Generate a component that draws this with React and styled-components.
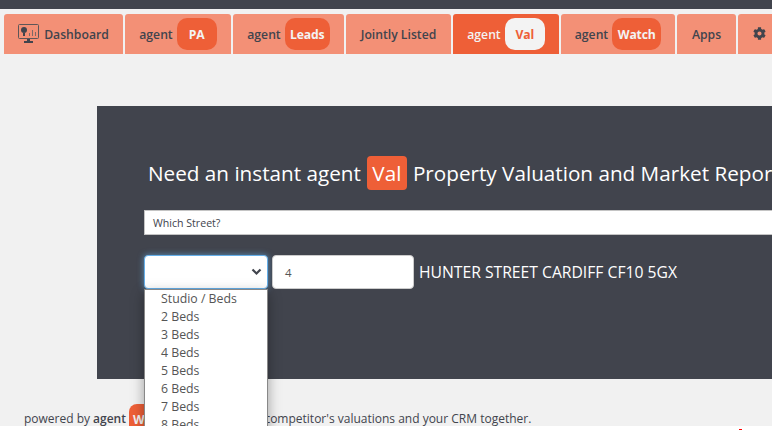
import React from "react";
import styled, { createGlobalStyle } from "styled-components";
import { FaCog } from "react-icons/fa";

const GlobalStyle = createGlobalStyle`
  html, body {
    margin: 0;
    padding: 0;
    background: #fff;
  }
  body {
    font-family: "Open Sans", "Liberation Sans", sans-serif;
    color: #41444d;
  }
`;

const Page = styled.div`
  width: 772px;
  height: 430px;
  overflow: hidden;
  position: relative;
`;

const Canvas = styled.div`
  height: 426px;
  background: #f1f1f1;
  overflow: hidden;
`;

const TopBar = styled.div`
  height: 9px;
  background: #41444d;
`;

const Tabs = styled.nav`
  display: flex;
  gap: 2px;
  margin: 5px 0 0 4px;
  width: 800px;
`;

const Tab = styled.a`
  box-sizing: border-box;
  flex: none;
  width: ${({ $w }) => $w}px;
  height: 40px;
  display: flex;
  align-items: center;
  justify-content: center;
  gap: 4px;
  border-radius: 3px 3px 0 0;
  font-size: 12.2px;
  font-weight: 600;
  background: ${({ $active }) => ($active ? "#ee5f37" : "#f39076")};
  color: ${({ $active }) => ($active ? "#f3f3f3" : "#41444d")};
`;

const TabIcon = styled.span`
  display: flex;
  margin-right: 1px;
`;

const GearWrap = styled.span`
  display: flex;
  margin: -2px 17px 0 0;
`;

const Pill = styled.span`
  display: flex;
  align-items: center;
  justify-content: center;
  height: 32px;
  width: ${({ $w }) => $w}px;
  border-radius: 10px;
  font-weight: 700;
  letter-spacing: -0.2px;
  background: ${({ $active }) => ($active ? "#f3f3f3" : "#ee5f37")};
  color: ${({ $active }) => ($active ? "#ee5f37" : "#f3f3f3")};
`;

const Panel = styled.section`
  box-sizing: border-box;
  margin: 52px 0 0 97px;
  width: 675px;
  height: 273px;
  background: #41444d;
  padding: 50px 0 0 47px;
  white-space: nowrap;
  position: relative;
  overflow: visible;
`;

const Heading = styled.h1`
  margin: 0 0 0 4px;
  width: 800px;
  height: 34px;
  display: flex;
  align-items: center;
  font-size: 20.7px;
  font-weight: 400;
  color: #fff;
`;

const HeadingBadge = styled.span`
  flex: none;
  display: inline-flex;
  align-items: center;
  justify-content: center;
  width: 40px;
  height: 34px;
  margin: 0 6px;
  border-radius: 4px;
  background: #ee5f37;
`;

const StreetBox = styled.div`
  box-sizing: border-box;
  height: 25px;
  width: 640px;
  margin-top: 20px;
  padding-left: 8px;
  display: flex;
  align-items: center;
  background: #fff;
  border: 1px solid #c4c4c4;
  font-size: 10.6px;
  color: #41444d;
`;

const Row = styled.div`
  display: flex;
  align-items: center;
  gap: 4px;
  margin-top: 20px;
  height: 34px;
`;

const BedsSelect = styled.div`
  box-sizing: border-box;
  width: 124px;
  height: 34px;
  background: #fff;
  border: 1px solid #66afe9;
  border-radius: 4px;
  box-shadow: 0 0 6px rgba(102, 175, 233, 0.7);
  display: flex;
  align-items: center;
  justify-content: flex-end;
  padding-right: 5px;
`;

const NumberBox = styled.div`
  box-sizing: border-box;
  width: 142px;
  height: 34px;
  background: #fff;
  border: 1px solid #ccc;
  border-radius: 4px;
  padding-left: 12px;
  display: flex;
  align-items: center;
  font-size: 11.5px;
  color: #555;
`;

const Address = styled.span`
  margin-left: 1px;
  font-size: 15.7px;
  font-weight: 400;
  color: #fff;
`;

const Dropdown = styled.ul`
  position: absolute;
  left: 47px;
  top: 183px;
  box-sizing: border-box;
  width: 124px;
  height: 200px;
  margin: 0;
  padding: 0 0 0 16px;
  list-style: none;
  background: #fff;
  border: 1px solid #888;
  box-shadow: 0 4px 12px rgba(0, 0, 0, 0.35);
  font-size: 12.3px;
  line-height: 18px;
  color: #555;
  z-index: 2;
`;

const Footer = styled.p`
  margin: 25px 0 0 24px;
  display: flex;
  align-items: center;
  height: 28px;
  font-size: 12px;
  color: #41444d;
  white-space: nowrap;
`;

const Strong = styled.b`
  font-weight: 600;
  margin: 0 3px;
`;

const FooterBadge = styled.span`
  display: inline-flex;
  align-self: flex-start;
  align-items: center;
  justify-content: center;
  flex: none;
  width: 46px;
  height: 30px;
  border-radius: 8px;
  background: #ee5f37;
  color: #f3f3f3;
  font-weight: 700;
  margin-right: 22px;
`;

const RedDot = styled.i`
  position: absolute;
  left: 739px;
  top: 429px;
  width: 3px;
  height: 1px;
  background: #f00;
`;

const DashIcon = () => (
  <svg width="21" height="20" viewBox="0 0 21 20" fill="none">
    <rect x="0.5" y="0.5" width="20" height="14" rx="1" stroke="#5d5658" />
    <circle cx="6" cy="6" r="3" fill="#41444d" />
    <rect x="5" y="9" width="2" height="3" fill="#41444d" />
    <path d="M11 12V9h1v3zM14 12V6h1v6zM17 12V8h1v4z" fill="#7d6a68" />
    <path d="M9 15h3v2H9zM6 17h9v2H6z" fill="#41444d" />
  </svg>
);

const Chevron = () => (
  <svg width="11" height="8" viewBox="0 0 11 8" fill="none">
    <path d="M1.5 1.5 5.5 5.5 9.5 1.5" stroke="#41444d" strokeWidth="2.2" />
  </svg>
);

const beds = ["Studio / Beds", "2 Beds", "3 Beds", "4 Beds", "5 Beds", "6 Beds", "7 Beds", "8 Beds"];

export default function App() {
  return (
    <Page>
      <GlobalStyle />
      <Canvas>
        <TopBar />
        <Tabs>
          <Tab $w={119}><TabIcon><DashIcon /></TabIcon> Dashboard</Tab>
          <Tab $w={106}>agent <Pill $w={40}>PA</Pill></Tab>
          <Tab $w={111}>agent <Pill $w={45}>Leads</Pill></Tab>
          <Tab $w={105}>Jointly Listed</Tab>
          <Tab $w={106} $active>agent <Pill $w={40} $active>Val</Pill></Tab>
          <Tab $w={114}>agent <Pill $w={49}>Watch</Pill></Tab>
          <Tab $w={59}>Apps</Tab>
          <Tab $w={60}><GearWrap><FaCog size={13} /></GearWrap></Tab>
        </Tabs>
        <Panel>
          <Heading>
            Need an instant agent <HeadingBadge>Val</HeadingBadge> Property Valuation and Market Report
          </Heading>
          <StreetBox>Which Street?</StreetBox>
          <Row>
            <BedsSelect><Chevron /></BedsSelect>
            <NumberBox>4</NumberBox>
            <Address>HUNTER STREET CARDIFF CF10 5GX</Address>
          </Row>
          <Dropdown>
            {beds.map((b) => <li key={b}>{b}</li>)}
          </Dropdown>
        </Panel>
        <Footer>
          powered by <Strong>agent</Strong>
          <FooterBadge>Watch</FooterBadge>
          Merge your competitor's valuations and your CRM together.
        </Footer>
      </Canvas>
      <RedDot />
    </Page>
  );
}
